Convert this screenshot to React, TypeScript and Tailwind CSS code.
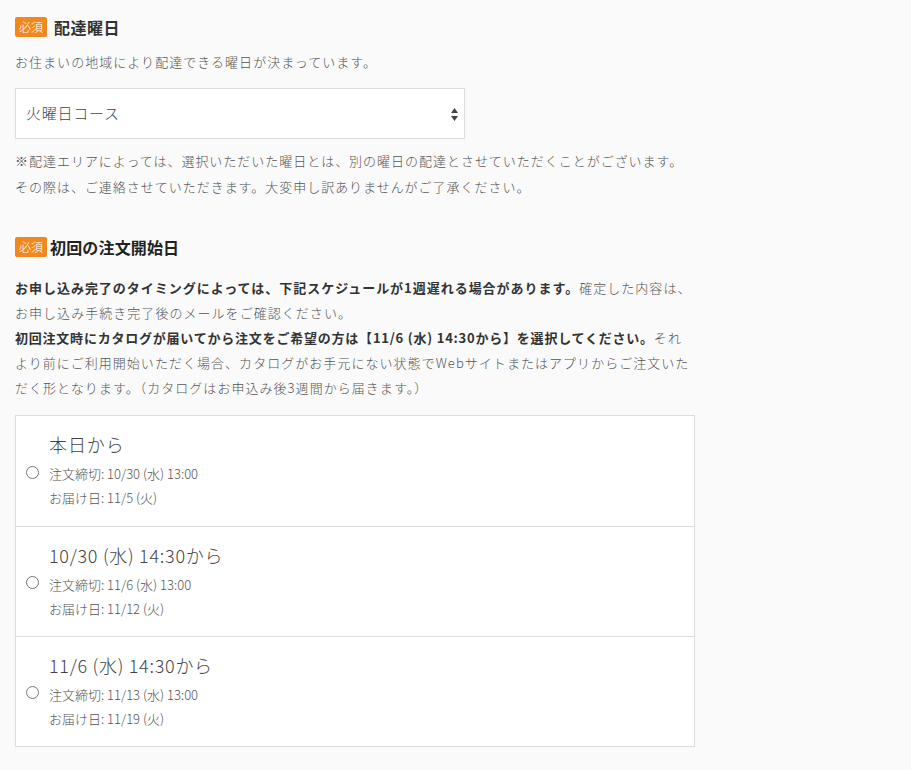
import React from "react";

const font = { fontFamily: '"Noto Sans CJK JP", "Noto Sans", sans-serif' };

function Badge() {
  return (
    <span className="inline-flex h-[20px] w-[32px] items-center justify-center rounded-[2px] bg-[#f0871f] text-[12px] font-light leading-none text-white">
      必須
    </span>
  );
}

const options = [
  { title: "本日から", deadline: "注文締切: 10/30 (水) 13:00", delivery: "お届け日: 11/5 (火)", titleTrack: "tracking-[0.05em]" },
  { title: "10/30 (水) 14:30から", deadline: "注文締切: 11/6 (水) 13:00", delivery: "お届け日: 11/12 (火)", titleTrack: "tracking-[0.04em]" },
  { title: "11/6 (水) 14:30から", deadline: "注文締切: 11/13 (水) 13:00", delivery: "お届け日: 11/19 (火)", titleTrack: "tracking-[0.04em]" },
];

export default function App() {
  return (
    <div className="min-h-[770px] w-full bg-[#fafafa] font-light text-[#555]" style={font}>
      <div className="w-[720px] pl-[15px] pt-[15px]">
        {/* Section 1 */}
        <div className="flex h-[24px] items-center gap-[7px]">
          <Badge />
          <span className="text-[16px] font-bold tracking-[0.03em] text-[#333]">配達曜日</span>
        </div>
        <p className="mt-[10px] text-[13px] leading-[26px] tracking-[0.08em]">
          お住まいの地域により配達できる曜日が決まっています。
        </p>
        <div className="relative mt-[13px] flex h-[51px] w-[450px] items-center border border-[#dddddd] bg-white pl-[10px]">
          <span className="text-[15px] tracking-[0.05em] text-[#444]">火曜日コース</span>
          <svg className="absolute right-[6px] top-[19px]" width="7" height="13" viewBox="0 0 7 13">
            <path d="M3.5 0 L7 5 L0 5 Z" fill="#444" />
            <path d="M0 8 L7 8 L3.5 13 Z" fill="#444" />
          </svg>
        </div>
        <p className="mt-[9px] whitespace-nowrap text-[13px] leading-[26px] tracking-[0.075em]">
          ※配達エリアによっては、選択いただいた曜日とは、別の曜日の配達とさせていただくことがございます。
          <br />
          その際は、ご連絡させていただきます。大変申し訳ありませんがご了承ください。
        </p>

        {/* Section 2 */}
        <div className="mt-[35px] flex h-[24px] items-center gap-[3px]">
          <Badge />
          <span className="text-[16px] font-bold tracking-[0.01em] text-[#222]">初回の注文開始日</span>
        </div>
        <p className="mt-[16px] whitespace-nowrap text-[13px] leading-[25px] tracking-[0.08em]">
          <b className="font-bold tracking-[0.075em] text-[#333]">お申し込み完了のタイミングによっては、下記スケジュールが1週遅れる場合があります。</b>
          確定した内容は、
          <br />
          お申し込み手続き完了後のメールをご確認ください。
          <br />
          <b className="font-bold tracking-[0.06em] text-[#333]">初回注文時にカタログが届いてから注文をご希望の方は【11/6 (水) 14:30から】を選択してください。</b>
          それ
          <br />
          より前にご利用開始いただく場合、カタログがお手元にない状態でWebサイトまたはアプリからご注文いた
          <br />
          だく形となります。（カタログはお申込み後3週間から届きます。）
        </p>

        <div className="mt-[15px] w-[680px] border border-[#dddddd] bg-white">
          {options.map((o, i) => (
            <label
              key={i}
              className={`flex h-[110px] items-center ${i > 0 ? "border-t border-[#dddddd]" : ""}`}
            >
              <span className="ml-[10px] mt-[2px] h-[13px] w-[13px] shrink-0 rounded-full border border-[#767676] bg-white" />
              <div className="ml-[10px] flex flex-col">
                <span className={`text-[18px] font-light leading-[24px] text-[#444] ${o.titleTrack}`}>{o.title}</span>
                <span className="mt-[6px] text-[13px] leading-[24px] text-[#555]">{o.deadline}</span>
                <span className="text-[13px] leading-[24px] text-[#555]">{o.delivery}</span>
              </div>
            </label>
          ))}
        </div>
      </div>
    </div>
  );
}
